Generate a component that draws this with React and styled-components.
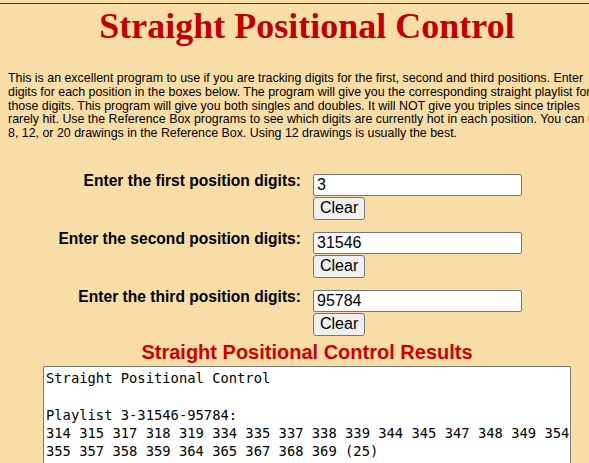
import React, { useState } from 'react'
import styled, { createGlobalStyle } from 'styled-components'

const GlobalStyle = createGlobalStyle`
  html, body {
    margin: 0;
    padding: 0;
    overflow: hidden;
    background: #f9dda7;
  }
`

const Page = styled.div`
  width: 614px;
  padding-top: 3px;
  font-family: "Liberation Sans", Arial, sans-serif;
  color: #000;
`

const TopRule = styled.div`
  height: 1px;
  background: #cc0000;
`

const Content = styled.div`
  padding: 0 8px;
`

const Title = styled.h1`
  margin: 2px 0 0;
  font-family: "Liberation Serif", "Times New Roman", serif;
  font-size: 36px;
  line-height: 40px;
  font-weight: bold;
  color: #c00000;
  text-align: center;
`

const Intro = styled.p`
  margin: 26px 0 0;
  font-size: 12.4px;
  line-height: 13.8px;
  white-space: nowrap;
`

const Form = styled.div`
  margin-top: 31px;
  display: grid;
  grid-template-columns: 293px 1fr;
  column-gap: 12px;
  row-gap: 10px;
  align-items: start;
`

const Label = styled.label`
  text-align: right;
  font-size: 15.6px;
  font-weight: bold;
  line-height: 18px;
`

const Controls = styled.div`
  padding-top: 2px;
  display: flex;
  flex-direction: column;
  align-items: flex-start;
`

const Input = styled.input`
  width: 209px;
  height: 22px;
  box-sizing: border-box;
  margin: 0;
  padding: 1px 3px;
  border: 1px solid #767676;
  border-radius: 2px;
  background: #fff;
  font-family: "Liberation Sans", Arial, sans-serif;
  font-size: 16px;
  color: #000;
`

const Button = styled.button`
  margin: 1px 0 0;
  height: 23px;
  padding: 1px 6px;
  border: 1px solid #767676;
  border-radius: 3px;
  background: #efefef;
  font-family: "Liberation Sans", Arial, sans-serif;
  font-size: 16px;
  line-height: 18px;
  color: #000;
`

const ResultsTitle = styled.h2`
  margin: 5px 0 0;
  font-size: 20px;
  line-height: 23px;
  font-weight: bold;
  color: #cc0000;
  text-align: center;
`

const Results = styled.textarea`
  display: block;
  margin: 2px auto 0;
  width: 528px;
  height: 130px;
  box-sizing: border-box;
  padding: 2px 2px;
  border: 1px solid #767676;
  border-radius: 2px;
  background: #fff;
  resize: none;
  font-family: "DejaVu Sans Mono", "Liberation Mono", monospace;
  font-size: 13.8px;
  line-height: 18.3px;
  color: #000;
  white-space: pre;
  overflow: hidden;
`

const fields = [
  { label: 'Enter the first position digits:', value: '3' },
  { label: 'Enter the second position digits:', value: '31546' },
  { label: 'Enter the third position digits:', value: '95784' },
]

const introLines = [
  'This is an excellent program to use if you are tracking digits for the first, second and third positions. Enter',
  'digits for each position in the boxes below. The program will give you the corresponding straight playlist for',
  'those digits. This program will give you both singles and doubles. It will NOT give you triples since triples',
  'rarely hit. Use the Reference Box programs to see which digits are currently hot in each position. You can use',
  '8, 12, or 20 drawings in the Reference Box. Using 12 drawings is usually the best.',
]

const output = `Straight Positional Control

Playlist 3-31546-95784:
314 315 317 318 319 334 335 337 338 339 344 345 347 348 349 354
355 357 358 359 364 365 367 368 369 (25)`

export default function App() {
  const [values, setValues] = useState(fields.map(f => f.value))

  const setAt = (i, v) => setValues(vs => vs.map((x, j) => (j === i ? v : x)))

  return (
    <Page>
      <GlobalStyle />
      <TopRule />
      <Content>
        <Title>Straight Positional Control</Title>
        <Intro>
          {introLines.map((line, i) => (
            <React.Fragment key={i}>
              {line}
              {i < introLines.length - 1 && <br />}
            </React.Fragment>
          ))}
        </Intro>
        <Form>
          {fields.map((f, i) => (
            <React.Fragment key={f.label}>
              <Label>{f.label}</Label>
              <Controls>
                <Input value={values[i]} onChange={e => setAt(i, e.target.value)} />
                <Button onClick={() => setAt(i, '')}>Clear</Button>
              </Controls>
            </React.Fragment>
          ))}
        </Form>
        <ResultsTitle>Straight Positional Control Results</ResultsTitle>
        <Results readOnly wrap="off" value={output} />
      </Content>
    </Page>
  )
}
